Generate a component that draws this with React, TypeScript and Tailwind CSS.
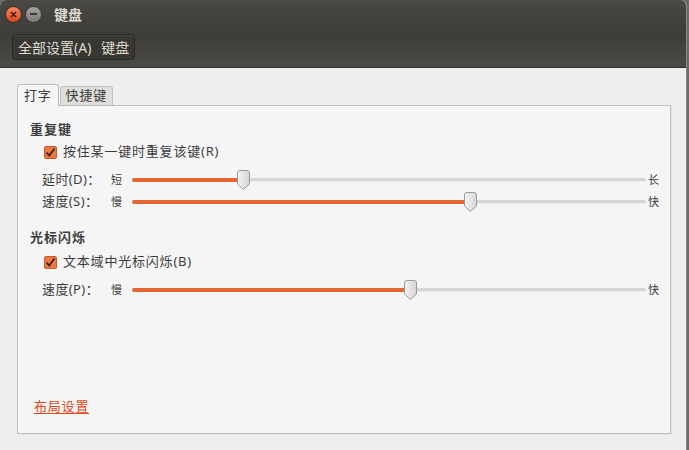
import React from "react"

const font = { fontFamily: '"Noto Sans", "Noto Sans CJK SC", sans-serif' }

function Thumb() {
  return (
    <svg width="13" height="20" viewBox="0 0 13 20">
      <defs>
        <linearGradient id="tg" x1="0" y1="0" x2="1" y2="0">
          <stop offset="0" stopColor="#f4f4f3" />
          <stop offset="1" stopColor="#d6d5d3" />
        </linearGradient>
      </defs>
      <path
        d="M3 0.5 H10 Q12.5 0.5 12.5 3 V14 L6.5 19.5 L0.5 14 V3 Q0.5 0.5 3 0.5 Z"
        fill="url(#tg)"
        stroke="#9a9a98"
      />
    </svg>
  )
}

function Slider({ label, min, max, value }: { label: string; min: string; max: string; value: number }) {
  return (
    <div className="flex items-center h-[22px]">
      <div className="w-[69px] text-[13px] tracking-[0.4px] text-[#3c3c3c]">{label}</div>
      <div className="w-[21px] text-[11px] text-[#3c3c3c]">{min}</div>
      <div className="relative w-[514px] h-[20px] flex items-center">
        <div className="w-full h-[4px] rounded-full bg-[#d6d6d4] border-b border-[#ececec]" />
        <div
          className="absolute left-0 h-[4px] rounded-full bg-[#e5672f]"
          style={{ width: `${value * 100}%` }}
        />
        <div className="absolute top-[0px]" style={{ left: `calc(${value * 100}% - 6px)` }}>
          <Thumb />
        </div>
      </div>
      <div className="ml-[2px] text-[11px] text-[#3c3c3c]">{max}</div>
    </div>
  )
}

function Check({ label }: { label: string }) {
  return (
    <div className="flex items-center gap-[6px] h-[22px] pl-[14px]">
      <div className="w-[13px] h-[13px] rounded-[2px] bg-[#ec7847] border border-[#c65a2a] flex items-center justify-center">
        <svg width="11" height="11" viewBox="0 0 11 11">
          <path d="M1.5 5.5 L4.2 8.5 L9.5 1.5" fill="none" stroke="#3a2418" strokeWidth="1.8" />
        </svg>
      </div>
      <span className="text-[13px] tracking-[0.8px] text-[#3c3c3c]">{label}</span>
    </div>
  )
}

export default function App() {
  return (
    <div className="w-[689px] h-[450px] bg-[#6a6965] overflow-hidden" style={font}>
      <div className="w-[687px] h-[450px] bg-[#efeeec] rounded-t-[6px] overflow-hidden border-r border-[#8a8a88]">
        <div className="h-[68px] bg-gradient-to-b from-[#4a4945] via-[#3d3c38] to-[#4b4a46] border-b border-[#2f2e2b]">
          <div className="h-[28px] flex items-center pl-[5px]">
            <div className="w-[17px] h-[17px] rounded-full bg-gradient-to-b from-[#f7845a] to-[#d9461c] border border-[#3a2a22] flex items-center justify-center">
              <svg width="7" height="7" viewBox="0 0 7 7">
                <path d="M1 1 L6 6 M6 1 L1 6" stroke="#4a1a0a" strokeWidth="1.6" />
              </svg>
            </div>
            <div className="ml-[3px] w-[17px] h-[17px] rounded-full bg-gradient-to-b from-[#a4a3a0] to-[#7b7a77] border border-[#3a3936] flex items-center justify-center">
              <div className="w-[7px] h-[2px] bg-[#3c3b38]" />
            </div>
            <span className="ml-[12px] text-[14px] font-bold text-[#dfdbd2]">键盘</span>
          </div>
          <div className="pl-[12px] pt-[6px]">
            <div className="inline-flex items-center h-[26px] px-[5px] gap-[10px] rounded-[3px] bg-[#383733] border border-[#2a2926] shadow-[inset_0_1px_0_rgba(255,255,255,0.06)] text-[14px] text-[#dfdbd2]">
              <span>全部设置(A)</span>
              <span>键盘</span>
            </div>
          </div>
        </div>

        <div className="pl-[17px] pr-[15px] pt-[15px]">
          <div className="flex items-end h-[22px]">
            <div className="h-[22px] px-[6px] flex items-center bg-[#f5f5f5] border border-b-0 border-[#bdbdbb] rounded-t-[3px] text-[13px] tracking-[0.8px] text-[#3c3c3c] relative top-[1px]">
              打字
            </div>
            <div className="ml-[1px] h-[19px] px-[5px] flex items-center bg-[#dfdedb] border border-b-0 border-[#c2c2c0] rounded-t-[3px] text-[13px] tracking-[0.8px] text-[#3c3c3c]">
              快捷键
            </div>
          </div>
          <div className="h-[329px] bg-[#f5f5f5] border border-[#bdbdbb] shadow-[1px_1px_0_#e4e4e2] pl-[12px] pt-[13px] flex flex-col">
            <div className="text-[13px] font-bold tracking-[1px] text-[#3c3c3c] h-[22px] flex items-center">重复键</div>
            <Check label="按住某一键时重复该键(R)" />
            <div className="h-[6px]" />
            <div className="pl-[12px]">
              <Slider label="延时(D)：" min="短" max="长" value={0.216} />
              <Slider label="速度(S)：" min="慢" max="快" value={0.657} />
            </div>
            <div className="h-[14px]" />
            <div className="text-[13px] font-bold tracking-[1px] text-[#3c3c3c] h-[22px] flex items-center">光标闪烁</div>
            <div className="h-[2px]" />
            <Check label="文本域中光标闪烁(B)" />
            <div className="h-[6px]" />
            <div className="pl-[12px]">
              <Slider label="速度(P)：" min="慢" max="快" value={0.541} />
            </div>
            <div className="flex-1" />
            <div className="pl-[4px] pb-[16px]">
              <span className="text-[13px] tracking-[0.8px] text-[#dd4814] underline underline-offset-2">布局设置</span>
            </div>
          </div>
        </div>
      </div>
    </div>
  )
}
